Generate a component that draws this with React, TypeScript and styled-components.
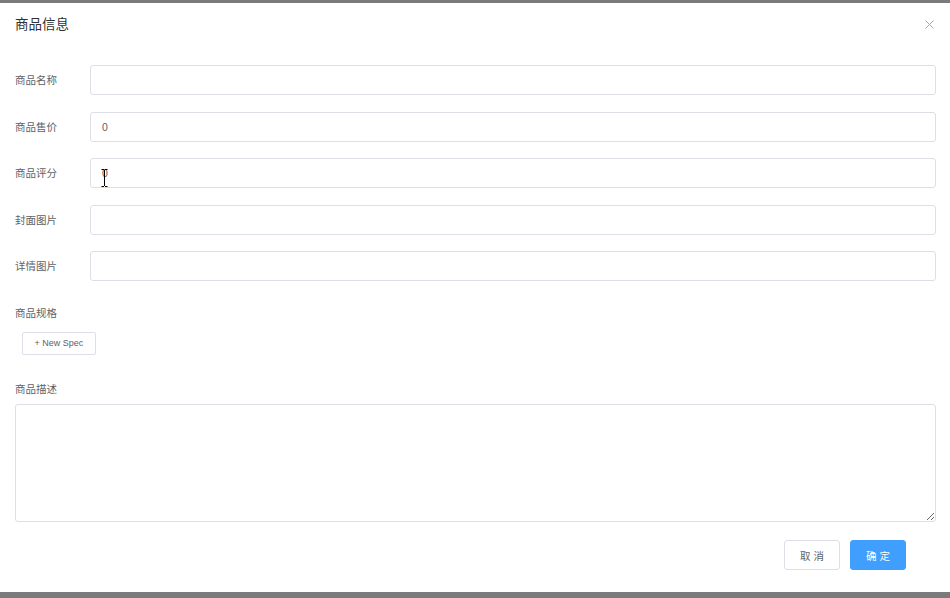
import styled, {createGlobalStyle} from 'styled-components'

const GlobalStyle = createGlobalStyle`
  html, body {
    margin: 0;
    padding: 0;
    background: #7b7b7b;
  }
  #root {
    height: 598px;
    overflow: hidden;
  }
`

type Field = {
  label: string
  value?: string
  cursor?: boolean
}

const fields: Field[] = [
  {label: '商品名称'},
  {label: '商品售价', value: '0'},
  {label: '商品评分', value: '0', cursor: true},
  {label: '封面图片'},
  {label: '详情图片'}
]

export default function App() {
  return (
    <>
      <GlobalStyle />
      <Overlay>
        <Dialog>
          <Header>
            <Title>商品信息</Title>
            <CloseButton aria-label="Close">
              <svg width="9" height="9" viewBox="0 0 9 9">
                <path d="M0.5 0.5L8.5 8.5M8.5 0.5L0.5 8.5" stroke="#a3a6ad" strokeWidth="1" />
              </svg>
            </CloseButton>
          </Header>
          <Body>
            {fields.map(f => (
              <FormItem key={f.label}>
                <Label>{f.label}</Label>
                <InputWrap>
                  <Input defaultValue={f.value ?? ''} />
                  {f.cursor && (
                    <Cursor width="7" height="18" viewBox="0 0 7 18">
                      <path d="M0.5 0.5h2.5M4 0.5h2.5M3.5 1v16M0.5 17.5h2.5M4 17.5h2.5" stroke="#000" strokeWidth="1" fill="none" />
                    </Cursor>
                  )}
                </InputWrap>
              </FormItem>
            ))}
            <TopItem>
              <TopLabel>商品规格</TopLabel>
              <SpecArea>
                <SmallButton>+ New Spec</SmallButton>
              </SpecArea>
            </TopItem>
            <TopItem>
              <TopLabel>商品描述</TopLabel>
              <TextArea />
            </TopItem>
          </Body>
          <Footer>
            <Button>取 消</Button>
            <Button primary>确 定</Button>
          </Footer>
        </Dialog>
      </Overlay>
    </>
  )
}

const Overlay = styled.div`
  height: 598px;
  padding-top: 3px;
  box-sizing: border-box;
  font-family: 'Liberation Sans', 'Noto Sans CJK SC', sans-serif;
`

const Dialog = styled.div`
  background: #fff;
  height: 589px;
  display: flex;
  flex-direction: column;
`

const Header = styled.div`
  display: flex;
  align-items: center;
  justify-content: space-between;
  padding: 12.5px 15px 0 15px;
`

const Title = styled.span`
  font-size: 13.5px;
  line-height: 18px;
  color: #303133;
`

const CloseButton = styled.button`
  border: 0;
  background: none;
  padding: 0;
  margin-right: 1px;
  display: flex;
  cursor: pointer;
`

const Body = styled.div`
  padding: 31.5px 14px 0 15px;
`

const FormItem = styled.div`
  display: flex;
  align-items: center;
  margin-bottom: 16.5px;
`

const Label = styled.label`
  width: 75px;
  flex-shrink: 0;
  font-size: 10.5px;
  line-height: 30px;
  color: #606266;
`

const InputWrap = styled.div`
  position: relative;
  flex: 1;
`

const Input = styled.input`
  display: block;
  width: 100%;
  height: 30px;
  box-sizing: border-box;
  border: 1px solid #dcdfe6;
  border-radius: 3px;
  padding: 0 11px;
  font-family: inherit;
  font-size: 10.5px;
  color: #606266;
  outline: none;
`

const Cursor = styled.svg`
  position: absolute;
  left: 11px;
  top: 11px;
`

const TopItem = styled.div`
  display: flex;
  flex-direction: column;
  margin-bottom: 0;
`

const TopLabel = styled.label`
  font-size: 10.5px;
  line-height: 30px;
  color: #606266;
`

const SpecArea = styled.div`
  padding: 4px 7px 3px;
  margin-bottom: 16.5px;
`

const SmallButton = styled.button`
  height: 23px;
  padding: 0 11.5px;
  border: 1px solid #dcdfe6;
  border-radius: 2px;
  background: #fff;
  font-family: inherit;
  font-size: 9px;
  color: #606266;
  cursor: pointer;
`

const TextArea = styled.textarea`
  display: block;
  width: 100%;
  height: 118px;
  box-sizing: border-box;
  border: 1px solid #dcdfe6;
  border-radius: 3px;
  padding: 4px 11px;
  font-family: inherit;
  font-size: 10.5px;
  color: #606266;
  outline: none;
`

const Footer = styled.div`
  display: flex;
  justify-content: flex-end;
  gap: 10px;
  padding: 18px 44px 0 0;
`

const Button = styled.button<{primary?: boolean}>`
  width: 56px;
  height: 30px;
  border-radius: 3px;
  border: 1px solid ${({primary}) => (primary ? '#409eff' : '#dcdfe6')};
  background: ${({primary}) => (primary ? '#409eff' : '#fff')};
  color: ${({primary}) => (primary ? '#fff' : '#606266')};
  font-family: inherit;
  font-size: 10.5px;
  cursor: pointer;
`
